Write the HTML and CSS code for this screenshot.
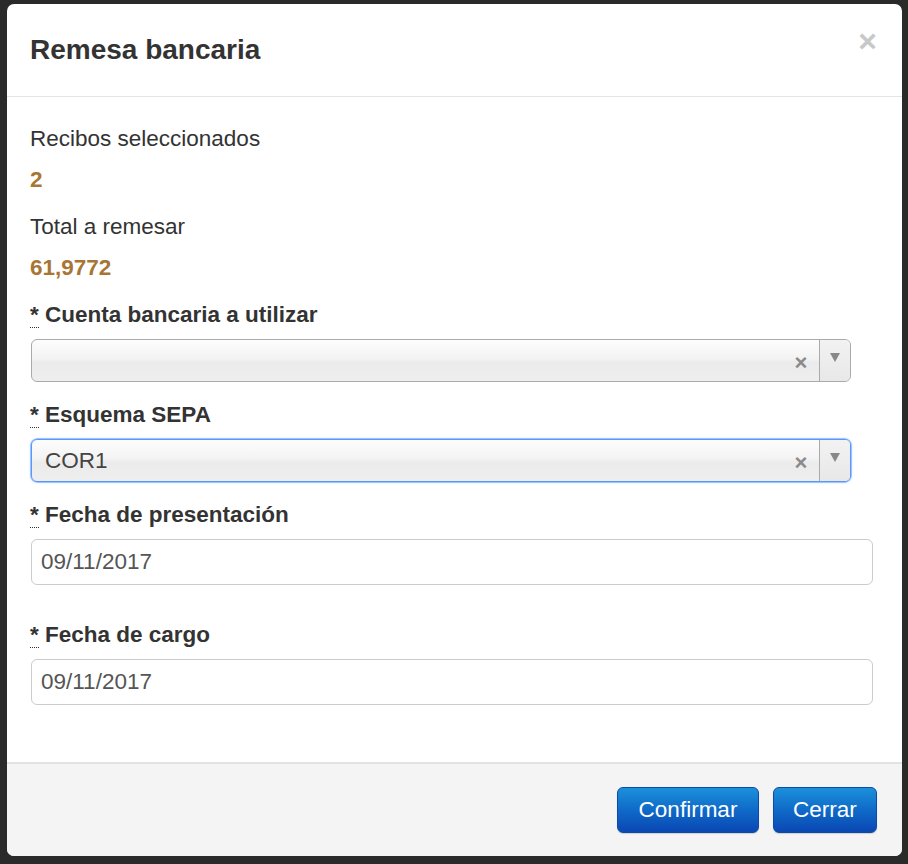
FILE: index.html
```html
<!DOCTYPE html>
<html lang="es">
<head>
<meta charset="utf-8">
<title>Remesa bancaria</title>
<link rel="stylesheet" href="styles.css">
</head>
<body>
<div class="modal">
  <div class="modal-header">
    <h4 class="modal-title">Remesa bancaria</h4>
    <button class="close" type="button">×</button>
  </div>
  <div class="modal-body">
    <div class="info">
      <p class="info-label">Recibos seleccionados</p>
      <p class="info-value">2</p>
    </div>
    <div class="info">
      <p class="info-label">Total a remesar</p>
      <p class="info-value">61,9772</p>
    </div>
    <div class="form-group group-select">
      <label class="field-label"><abbr class="req" title="obligatorio">*</abbr> Cuenta bancaria a utilizar</label>
      <div class="select select-short">
        <span class="select-text"></span>
        <span class="select-clear">×</span>
        <span class="select-arrow"><span class="arrow-tri"></span></span>
      </div>
    </div>
    <div class="form-group group-select">
      <label class="field-label"><abbr class="req" title="obligatorio">*</abbr> Esquema SEPA</label>
      <div class="select select-short select-focus">
        <span class="select-text">COR1</span>
        <span class="select-clear">×</span>
        <span class="select-arrow"><span class="arrow-tri"></span></span>
      </div>
    </div>
    <div class="form-group group-date">
      <label class="field-label"><abbr class="req" title="obligatorio">*</abbr> Fecha de presentación</label>
      <div class="input">09/11/2017</div>
    </div>
    <div class="form-group">
      <label class="field-label"><abbr class="req" title="obligatorio">*</abbr> Fecha de cargo</label>
      <div class="input">09/11/2017</div>
    </div>
  </div>
  <div class="modal-footer">
    <button class="btn btn-confirm" type="button">Confirmar</button>
    <button class="btn btn-cancel" type="button">Cerrar</button>
  </div>
</div>
</body>
</html>
```

FILE: styles.css
```css
* { box-sizing: border-box; }

html, body {
  margin: 0;
  height: 100%;
}

body {
  background: #2a2a2a;
  padding: 4px 6px 8px 7px;
  font-family: "Liberation Sans", Arial, Helvetica, sans-serif;
  font-size: 22.5px;
  color: #333;
}

.modal {
  width: 895px;
  height: 852px;
  background: #fff;
  border-radius: 7px;
  display: flex;
  flex-direction: column;
  overflow: hidden;
}

.modal-header {
  height: 93px;
  flex: none;
  display: flex;
  align-items: center;
  justify-content: space-between;
  padding: 0 23px 1px 23px;
  border-bottom: 1px solid #e5e5e5;
}

.modal-title {
  margin: 0;
  font-size: 28px;
  font-weight: bold;
  color: #333;
  line-height: 32px;
}

.close {
  border: 0;
  background: none;
  padding: 0;
  margin: -18px 2px 0 0;
  font-family: "Liberation Sans", Arial, sans-serif;
  font-size: 32px;
  font-weight: bold;
  line-height: 1;
  color: #c8c8c8;
}

.modal-body {
  flex: 1;
  padding: 26px 29px 0 23px;
}

.info p {
  margin: 0;
  line-height: 32px;
}

.info-label {
  margin-bottom: 9px !important;
}

.info-value {
  font-weight: bold;
  color: #a97535;
  margin-bottom: 15px !important;
}

.form-group {
  margin-bottom: 17px;
}

.group-select {
  margin-bottom: 17px;
}

.group-date {
  margin-bottom: 34px;
}

.field-label {
  display: block;
  font-weight: bold;
  line-height: 32px;
  margin-bottom: 8px;
}

.req {
  text-decoration: none;
  border-bottom: 1px dotted #333;
  cursor: help;
}

.select {
  margin-left: 1px;
  height: 43px;
  border: 1px solid #aaa;
  border-radius: 6px;
  background: linear-gradient(to bottom, #fdfdfd 0%, #f3f3f3 45%, #ebebeb 55%, #eeeeee 100%);
  display: flex;
  align-items: center;
  overflow: hidden;
}

.select-short {
  width: 820px;
}

.select-focus {
  border-color: #5897fb;
  box-shadow: 0 0 0 0.5px #5897fb, 0 0 3px rgba(88, 151, 251, 0.45);
}

.select-text {
  flex: 1;
  padding-left: 13px;
  color: #444;
  line-height: 41px;
}

.select-clear {
  width: 26px;
  margin-right: 5px;
  text-align: center;
  font-weight: bold;
  font-size: 22px;
  color: #8a8a8a;
  line-height: 41px;
  padding-top: 4px;
}

.select-arrow {
  width: 31px;
  align-self: stretch;
  border-left: 1px solid #aaa;
  background: linear-gradient(to bottom, #f2f2f2, #e8e8e8);
  display: flex;
  justify-content: center;
  padding-top: 13px;
}

.arrow-tri {
  width: 0;
  height: 0;
  border-left: 5px solid transparent;
  border-right: 5px solid transparent;
  border-top: 9px solid #888;
}

.input {
  margin-left: 1px;
  width: 842px;
  height: 46px;
  border: 1px solid #ccc;
  border-radius: 6px;
  padding: 0 9px;
  line-height: 44px;
  color: #555;
  background: #fff;
}

.modal-footer {
  flex: none;
  height: 94px;
  border-top: 2px solid #e2e2e2;
  background: #f4f4f4;
  display: flex;
  justify-content: flex-end;
  align-items: flex-start;
  gap: 14px;
  padding: 23px 25px 0 0;
}

.btn {
  height: 46px;
  padding: 0;
  text-align: center;
  border: 1px solid #0b4aa6;
  border-radius: 6px;
  background: linear-gradient(to bottom, #1b90da 0%, #0f6ac8 50%, #0a47b3 100%);
  color: #fff;
  font-family: "Liberation Sans", Arial, sans-serif;
  font-size: 22.5px;
  line-height: 44px;
  box-shadow: 0 1px 1px rgba(0, 0, 0, 0.15);
}

.btn-confirm {
  width: 142px;
}

.btn-cancel {
  width: 104px;
}
```
